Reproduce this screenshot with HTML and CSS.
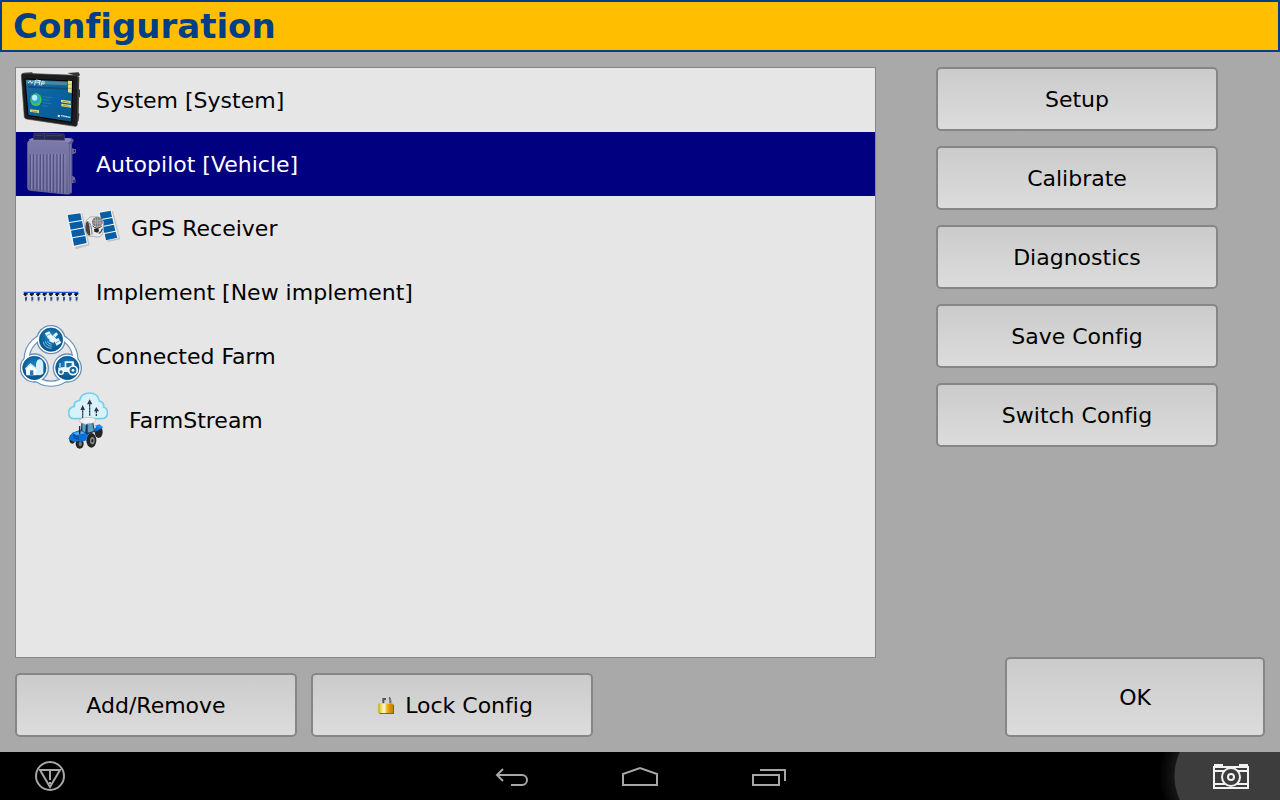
FILE: index.html
```html
<!DOCTYPE html>
<html lang="en">
<head>
<meta charset="UTF-8">
<meta name="viewport" content="width=device-width, initial-scale=1.0">
<title>Configuration</title>
<link rel="stylesheet" href="styles.css">
</head>
<body>
  <header class="title-bar">
    <h1>Configuration</h1>
  </header>

  <main class="screen">
    <section class="left">
      <ul class="device-list">
        <li>
          <button class="device">
            <!-- display terminal -->
            <svg width="66" height="64" viewBox="18 12 198 192" aria-hidden="true">
              <defs>
                <linearGradient id="screenBlue" x1="0" y1="0" x2="1" y2="1">
                  <stop offset="0" stop-color="#1c6a9c"/>
                  <stop offset=".5" stop-color="#0a63a0"/>
                  <stop offset="1" stop-color="#05578c"/>
                </linearGradient>
              </defs>
              <path d="M31 26l24-1 1 6H32zM160 27l34-2 4 8-5 5z" fill="#333"/>
              <path d="M189 37l7 3-1 35 3 3v20l-3 3-1 45 2 4-2 20-6 7z" fill="#3a3a3a"/>
              <path d="M28 28Q22 28 22 35L31 159Q32 164 38 165L183 187Q190 188 190 181L192 43Q192 34 184 34Z" fill="#1c1c1e" stroke="#484848" stroke-width="2"/>
              <path d="M33 45L176 51 173 175 42 154Z" fill="url(#screenBlue)" stroke="#000" stroke-width="3"/>
              <path d="M36 48l124 6v10L37 59z" fill="#4588a3"/>
              <path d="M42 66l118 6v5L43 71z" fill="#0f4c7d"/>
              <path d="M43 57l5-7 5 8 4-6M64 48l-2 16M66 48l12 2-2 5-12-1M79 49l-4 15M81 65l3-12 7 1-1 6-7-1" fill="none" stroke="#d8eef0" stroke-width="3"/>
              <path d="M89 51l6 4-5 3z" fill="#e3a82c"/>
              <path d="M162 50l12 1-1 36-11-2z" fill="#e9e27b"/>
              <path d="M162 61h11M162 73h11" stroke="#769a70" stroke-width="2"/>
              <ellipse cx="66" cy="107" rx="17" ry="19" fill="#49c643"/>
              <ellipse cx="65" cy="105" rx="13" ry="15" fill="#25a4d8"/>
              <ellipse cx="62" cy="101" rx="8" ry="9" fill="#b9f1fa"/>
              <path d="M85 98l29 3M86 107l20 2M87 116l25 3M86 125l15 2" stroke="#2888bf" stroke-width="2"/>
              <path d="M141 107l29 4v8l-29-4zM142 119l29 4v8l-29-4zM48 136l27 3v8l-27-4z" fill="#e6db7d"/>
              <path d="M146 112l20 3M147 124l20 3M53 141l17 2" stroke="#807a3b" stroke-width="2"/>
              <path d="M132 152l6 2-2 6-5-2z" fill="#fff"/>
              <path d="M141 155l28 5" stroke="#d3ecf8" stroke-width="4" stroke-dasharray="4 1"/>
            </svg>
            <span>System [System]</span>
          </button>
        </li>
        <li>
          <button class="device selected" aria-current="true">
            <!-- autopilot controller -->
            <svg width="66" height="64" viewBox="18 6 198 192" aria-hidden="true">
              <defs>
                <linearGradient id="caseFront" x1="0" y1="0" x2="0" y2="1">
                  <stop offset="0" stop-color="#7c7aa8"/>
                  <stop offset="1" stop-color="#62608f"/>
                </linearGradient>
              </defs>
              <path d="M171 54l8 2 7 2v10l-6 3-5 1v66l8 4 2 15-8 3-6-2z" fill="#6a6898"/>
              <path d="M181 60v6M180 150v7" stroke="#17174b" stroke-width="3"/>
              <path d="M154 29l18-6 8 7-6 12v146l-10 6-16-3z" fill="#5d5b91"/>
              <path d="M45 28l11-4h110l7 6-8 7-116 1z" fill="#8d8bb5"/>
              <path d="M41 39q0-7 7-7l106 4q10 1 10 9v139q0 8-10 8L48 181q-7-1-7-8z" fill="url(#caseFront)" stroke="#7d7ba9" stroke-width="2"/>
              <path d="M60 10l31-1 59 3 2 19-94-2z" fill="#25254e" stroke="#4b4a78" stroke-width="2"/>
              <path d="M91 10v19M64 16h22M96 17h48" stroke="#43426c" stroke-width="3"/>
              <path d="M49 72v106M59 72v108M69 72v110M79 72v110M89 72v112M99 72v113M109 72v114M119 72v115M129 72v117M139 72v118M149 72v119" stroke="#4d4b80" stroke-width="3"/>
              <path d="M53 71v107M63 71v108M73 71v110M83 71v110M93 71v112M103 71v113M113 71v114M123 71v115M133 71v117M143 71v118M153 71v119" stroke="#8a88b4" stroke-width="3"/>
              <path d="M169 42v143" stroke="#7c7aa9" stroke-width="3"/>
            </svg>
            <span>Autopilot [Vehicle]</span>
          </button>
        </li>
        <li>
          <button class="device child">
            <!-- satellite -->
            <svg width="56" height="64" viewBox="18 -12 168 192" aria-hidden="true">
              <path d="M30 47l40-7 22 96-42 12zM125 40l37-7 22 85-38 8z" fill="#c2c2c2"/>
              <path d="M73 91l18-4M131 77l10-3" stroke="#555" stroke-width="6"/>
              <path d="M23 43l43-6 21 95-45 10z" fill="#f7f7f7"/>
              <path d="M120 36l37-6 22 84-40 9z" fill="#f7f7f7"/>
              <path d="M26 45l38-5 4 20-38 6zM31 69l38-6 4 19-38 7zM36 92l38-7 4 20-38 7zM41 115l38-7 4 21-38 8z" fill="#075da4"/>
              <path d="M122 38l33-6 4 19-33 6zM127 60l33-6 4 17-33 7zM132 81l33-7 4 18-33 7zM137 102l33-7 5 18-34 8z" fill="#075da4"/>
              <path d="M82 62q-6 10-3 27 3 19 11 19l28 3q12-2 15-17l1-30-16-14-24 1z" fill="#e9e9e9" stroke="#999" stroke-width="2"/>
              <path d="M84 63q7 5 8 20l2 23q-8 2-13-13-4-17 3-30z" fill="#444"/>
              <path d="M87 65q11 4 12 39" fill="none" stroke="#777" stroke-width="3"/>
              <ellipse cx="115" cy="66" rx="16" ry="15" fill="#777"/>
              <path d="M102 62h26M101 69h28M109 53v26M116 51v30M123 54v24" stroke="#c1c1c1" stroke-width="2"/>
              <path d="M101 78q11 12 27 1" fill="none" stroke="#333" stroke-width="3"/>
              <path d="M105 87l13-3 2 9-5 5-9-3z" fill="#222"/>
              <path d="M119 100q9-3 11-14" fill="none" stroke="#555" stroke-width="4"/>
            </svg>
            <span>GPS Receiver</span>
          </button>
        </li>
        <li>
          <button class="device">
            <!-- implement boom -->
            <svg width="66" height="64" viewBox="18 -60 198 192" aria-hidden="true">
              <defs>
                <g id="rowUnit">
                  <path d="M-6 39H5v5H1v4h-6v-3h-3z" fill="#181818"/>
                  <path d="M-3 51h6v7l-3 4h-3z" fill="#2b4c96"/>
                  <path d="M-3 51l5 0M-2 63h5" stroke="#85888f" stroke-width="2"/>
                </g>
              </defs>
              <path d="M29 37h164" stroke="#2158dd" stroke-width="4"/>
              <use href="#rowUnit" x="36"/>
              <use href="#rowUnit" x="55"/>
              <use href="#rowUnit" x="74"/>
              <use href="#rowUnit" x="93"/>
              <use href="#rowUnit" x="112"/>
              <use href="#rowUnit" x="131"/>
              <use href="#rowUnit" x="150"/>
              <use href="#rowUnit" x="169"/>
              <use href="#rowUnit" x="188"/>
            </svg>
            <span>Implement [New implement]</span>
          </button>
        </li>
        <li>
          <button class="device">
            <!-- three linked circles: satellite, barn, tractor -->
            <svg width="66" height="64" viewBox="18 12 198 192" aria-hidden="true">
              <defs>
                <radialGradient id="badge" cx=".5" cy=".4" r=".6">
                  <stop offset="0" stop-color="#2385bd"/>
                  <stop offset="1" stop-color="#03528f"/>
                </radialGradient>
              </defs>
              <circle cx="111" cy="118" r="73" fill="none" stroke="#6891b9" stroke-width="19"/>
              <g fill="#6891b9">
                <circle cx="111" cy="59" r="44"/>
                <circle cx="61" cy="144" r="44"/>
                <circle cx="160" cy="144" r="44"/>
              </g>
              <circle cx="111" cy="118" r="73" fill="none" stroke="#fff" stroke-width="12"/>
              <g fill="#fff">
                <circle cx="111" cy="59" r="40"/>
                <circle cx="61" cy="144" r="40"/>
                <circle cx="160" cy="144" r="40"/>
              </g>
              <g fill="url(#badge)" stroke="#064e86" stroke-width="2">
                <circle cx="111" cy="59" r="35"/>
                <circle cx="61" cy="144" r="35"/>
                <circle cx="160" cy="144" r="35"/>
              </g>
              <path d="M92 40l14-6 9 14-12 9zM120 61l13-7 9 14-14 9zM106 53l11-7 10 11-9 12-12-5zM117 45l10-8 5 6-8 9z" fill="#e7f6ff"/>
              <path d="M98 47l12-6M125 69l12-7" stroke="#3981b0" stroke-width="2"/>
              <path d="M88 66q2 18 25 19M94 64q3 13 19 15M100 64q3 8 13 9" fill="none" stroke="#b9e5fa" stroke-width="2"/>
              <path d="M66 165v-33q2-14 11-14t11 14v29l-9 5z" fill="#d9effb"/>
              <path d="M35 146l14-14 18 14v20H37z" fill="#fff"/>
              <path d="M34 147l15-15 20 15" fill="none" stroke="#bfe4f5" stroke-width="4"/>
              <path d="M48 151h10v14H48z" fill="#2b78aa"/>
              <path d="M132 143l20-2v-17h27l4 21-4 11h-44z" fill="#e7f7ff"/>
              <path d="M157 129h16v13h-16z" fill="#176aa3"/>
              <path d="M138 141v-12" stroke="#fff" stroke-width="3"/>
              <circle cx="177" cy="151" r="13" fill="#176aa3" stroke="#fff" stroke-width="5"/>
              <circle cx="177" cy="151" r="4" fill="#fff"/>
              <circle cx="141" cy="156" r="7" fill="#176aa3" stroke="#fff" stroke-width="4"/>
            </svg>
            <span>Connected Farm</span>
          </button>
        </li>
        <li>
          <button class="device child">
            <!-- tractor uploading to a cloud -->
            <svg width="54" height="64" viewBox="15 0 162 192" aria-hidden="true">
              <path d="M43 92q-17 0-17-18 0-15 17-19-2-16 16-18 4-22 30-22 25 0 29 24 15 3 13 18 12 4 11 18 0 17-17 17z" fill="#d8f2fa" stroke="#75d0ed" stroke-width="5"/>
              <path d="M68 92V64M89 83V47M109 84V68" stroke="#30334e" stroke-width="4" stroke-dasharray="7 2"/>
              <path d="M61 66l7-15 7 15zM81 49l8-15 8 15zM102 70l7-13 8 13z" fill="#30334e"/>
              <g fill="#252525">
                <ellipse cx="116" cy="132" rx="12" ry="18"/>
                <ellipse cx="37" cy="153" rx="9" ry="14"/>
                <ellipse cx="59" cy="167" rx="12" ry="15"/>
                <ellipse cx="94" cy="157" rx="15" ry="22"/>
              </g>
              <path d="M37 134l28-10 35 3 14-16 14 9-17 9-23 7-11 22-15 3-7-2-12 4-18-11z" fill="#0873dc"/>
              <path d="M64 101l36 3 5 27-23 8-19-6z" fill="#18324a"/>
              <path d="M67 106l11 2-2 25-9-3zM83 108l14-2 5 23-19 5z" fill="#5b9fc5"/>
              <path d="M59 97q6-8 22-9 19-1 27 6l-5 10-27 5-16-6z" fill="#f1f2f0" stroke="#bbb" stroke-width="2"/>
              <path d="M37 135l27-7 14 8-14 25-24-7z" fill="#0b6ed1"/>
              <path d="M39 135l26-5 11 6-26 5z" fill="#54aaf3"/>
              <path d="M39 142l18 6M40 148l17 6" stroke="#033d83" stroke-width="3"/>
              <path d="M104 113l14-4 12 9-12 4z" fill="#1689ee"/>
              <ellipse cx="97" cy="158" rx="7" ry="11" fill="#858585"/>
              <ellipse cx="97" cy="158" rx="3" ry="5" fill="#222"/>
              <ellipse cx="61" cy="168" rx="5" ry="7" fill="#777"/>
              <path d="M59 139v-25" stroke="#222" stroke-width="4"/>
            </svg>
            <span>FarmStream</span>
          </button>
        </li>
      </ul>

      <div class="list-actions">
        <button class="btn">Add/Remove</button>
        <button class="btn lock">
          <svg width="18" height="20" viewBox="0 0 54 60" aria-hidden="true">
            <defs>
              <linearGradient id="brass">
                <stop offset="0" stop-color="#b8a600"/>
                <stop offset=".15" stop-color="#e8d83a"/>
                <stop offset=".4" stop-color="#fff8e0"/>
                <stop offset=".6" stop-color="#e9b81c"/>
                <stop offset=".8" stop-color="#e09000"/>
                <stop offset="1" stop-color="#b98500"/>
              </linearGradient>
            </defs>
            <path d="M19 25V12h8M36 8q5 2 4 17" fill="none" stroke="#555" stroke-width="6"/>
            <path d="M35 8l5 3v14" fill="none" stroke="#a89ca0" stroke-width="2"/>
            <path d="M7 29h44v28H7z" fill="#666"/>
            <path d="M4 26h44v28H4z" fill="url(#brass)"/>
          </svg>
          Lock Config
        </button>
      </div>
    </section>

    <aside class="right">
      <div class="menu">
        <button class="btn">Setup</button>
        <button class="btn">Calibrate</button>
        <button class="btn">Diagnostics</button>
        <button class="btn">Save Config</button>
        <button class="btn">Switch Config</button>
      </div>
      <button class="btn ok">OK</button>
    </aside>
  </main>

  <nav class="system-bar">
    <button class="nav-btn alert" aria-label="Alerts">
      <svg width="32" height="32" viewBox="0 0 32 32">
        <circle cx="16" cy="16" r="14"/>
        <path d="M6 10h20L16 27zM16 11v9M16 22v2"/>
      </svg>
    </button>
    <div class="nav-keys">
      <button class="nav-btn" aria-label="Back">
        <svg width="36" height="24" viewBox="0 0 36 24">
          <path d="M9 5L3 11l6 6M3 11h25a5 5 0 0 1 0 10H17"/>
        </svg>
      </button>
      <button class="nav-btn" aria-label="Home">
        <svg width="36" height="24" viewBox="0 0 36 24">
          <path d="M1 21V10l17-6 17 6v11z"/>
        </svg>
      </button>
      <button class="nav-btn" aria-label="Recent apps">
        <svg width="36" height="24" viewBox="0 0 36 24">
          <path d="M3 11h26v10H3zM10 6h25v11"/>
        </svg>
      </button>
    </div>
    <button class="nav-btn camera" aria-label="Screenshot">
      <svg width="38" height="28" viewBox="0 0 38 28">
        <path d="M2 5h34v21H2zM2 9h11M25 9h11M2 22h11M25 22h11M3 5V3h7v2M28 5V3h7v2"/>
        <circle cx="19" cy="15" r="9"/>
        <circle cx="19" cy="15" r="3"/>
      </svg>
    </button>
  </nav>
</body>
</html>
```
FILE: styles.css
```css
body {
  font-family: "DejaVu Sans", Verdana, sans-serif;
  font-size: 22px;
  font-variant-ligatures: none;
  margin: 0;
  min-height: 100vh;
  display: flex;
  flex-direction: column;
  background-color: #a9a9a9;
  color: #000;
}

button {
  font-family: inherit;
  font-size: inherit;
  font-variant-ligatures: inherit;
  color: inherit;
  cursor: pointer;
}

.title-bar {
  box-sizing: border-box;
  height: 52px;
  padding: 0 11px;
  border: 2px solid #003f87;
  background-color: #ffbf00;
}

.title-bar h1 {
  margin: 0;
  font-size: 34px;
  line-height: 48px;
  color: #003f87;
}

/* Main screen */
.screen {
  flex: 1;
  display: grid;
  grid-template-columns: 1fr 329px;
  gap: 60px;
  padding: 15px;
}

.left {
  display: flex;
  flex-direction: column;
  gap: 15px;
}

.device-list {
  flex: 1;
  margin: 0;
  padding: 0;
  list-style: none;
  border: 1px solid #868686;
  background-color: #e6e6e6;
}

.device {
  display: flex;
  align-items: center;
  gap: 10px;
  width: 100%;
  height: 64px;
  padding: 0 4px;
  border: none;
  background: none;
  text-align: left;
}

.device.child {
  padding-left: 49px;
}

.device.selected {
  background-color: #000080;
  color: #fff;
}

.list-actions {
  display: flex;
  gap: 14px;
}

/* Buttons */
.btn {
  display: flex;
  align-items: center;
  justify-content: center;
  gap: 10px;
  box-sizing: border-box;
  width: 282px;
  height: 64px;
  border: 2px solid #868686;
  border-radius: 5px;
  background: linear-gradient(#cbcbcb, #dcdcdc);
}

.btn.lock {
  padding-left: 12px;
}

.right {
  display: flex;
  flex-direction: column;
  justify-content: space-between;
}

.menu {
  display: flex;
  flex-direction: column;
  gap: 15px;
}

.btn.ok {
  align-self: flex-end;
  width: 260px;
  height: 80px;
}

/* System bar */
.system-bar {
  display: grid;
  grid-template-columns: 1fr auto 1fr;
  height: 48px;
  background-color: #000;
}

.nav-keys {
  display: flex;
}

.nav-btn {
  display: flex;
  align-items: center;
  justify-content: center;
  width: 128px;
  padding: 0;
  border: none;
  background: none;
}

.nav-btn svg {
  fill: none;
  stroke: #a6a6a6;
  stroke-width: 2;
}

.nav-btn.alert {
  width: 100px;
}

.nav-btn.camera {
  justify-self: end;
  width: 130px;
  padding-left: 32px;
  background: radial-gradient(circle at 81px 24px, #3d3d3d 56px, #161616 57px, #000 72px);
}

.nav-btn.camera svg {
  stroke: #f2f2f2;
}
```
